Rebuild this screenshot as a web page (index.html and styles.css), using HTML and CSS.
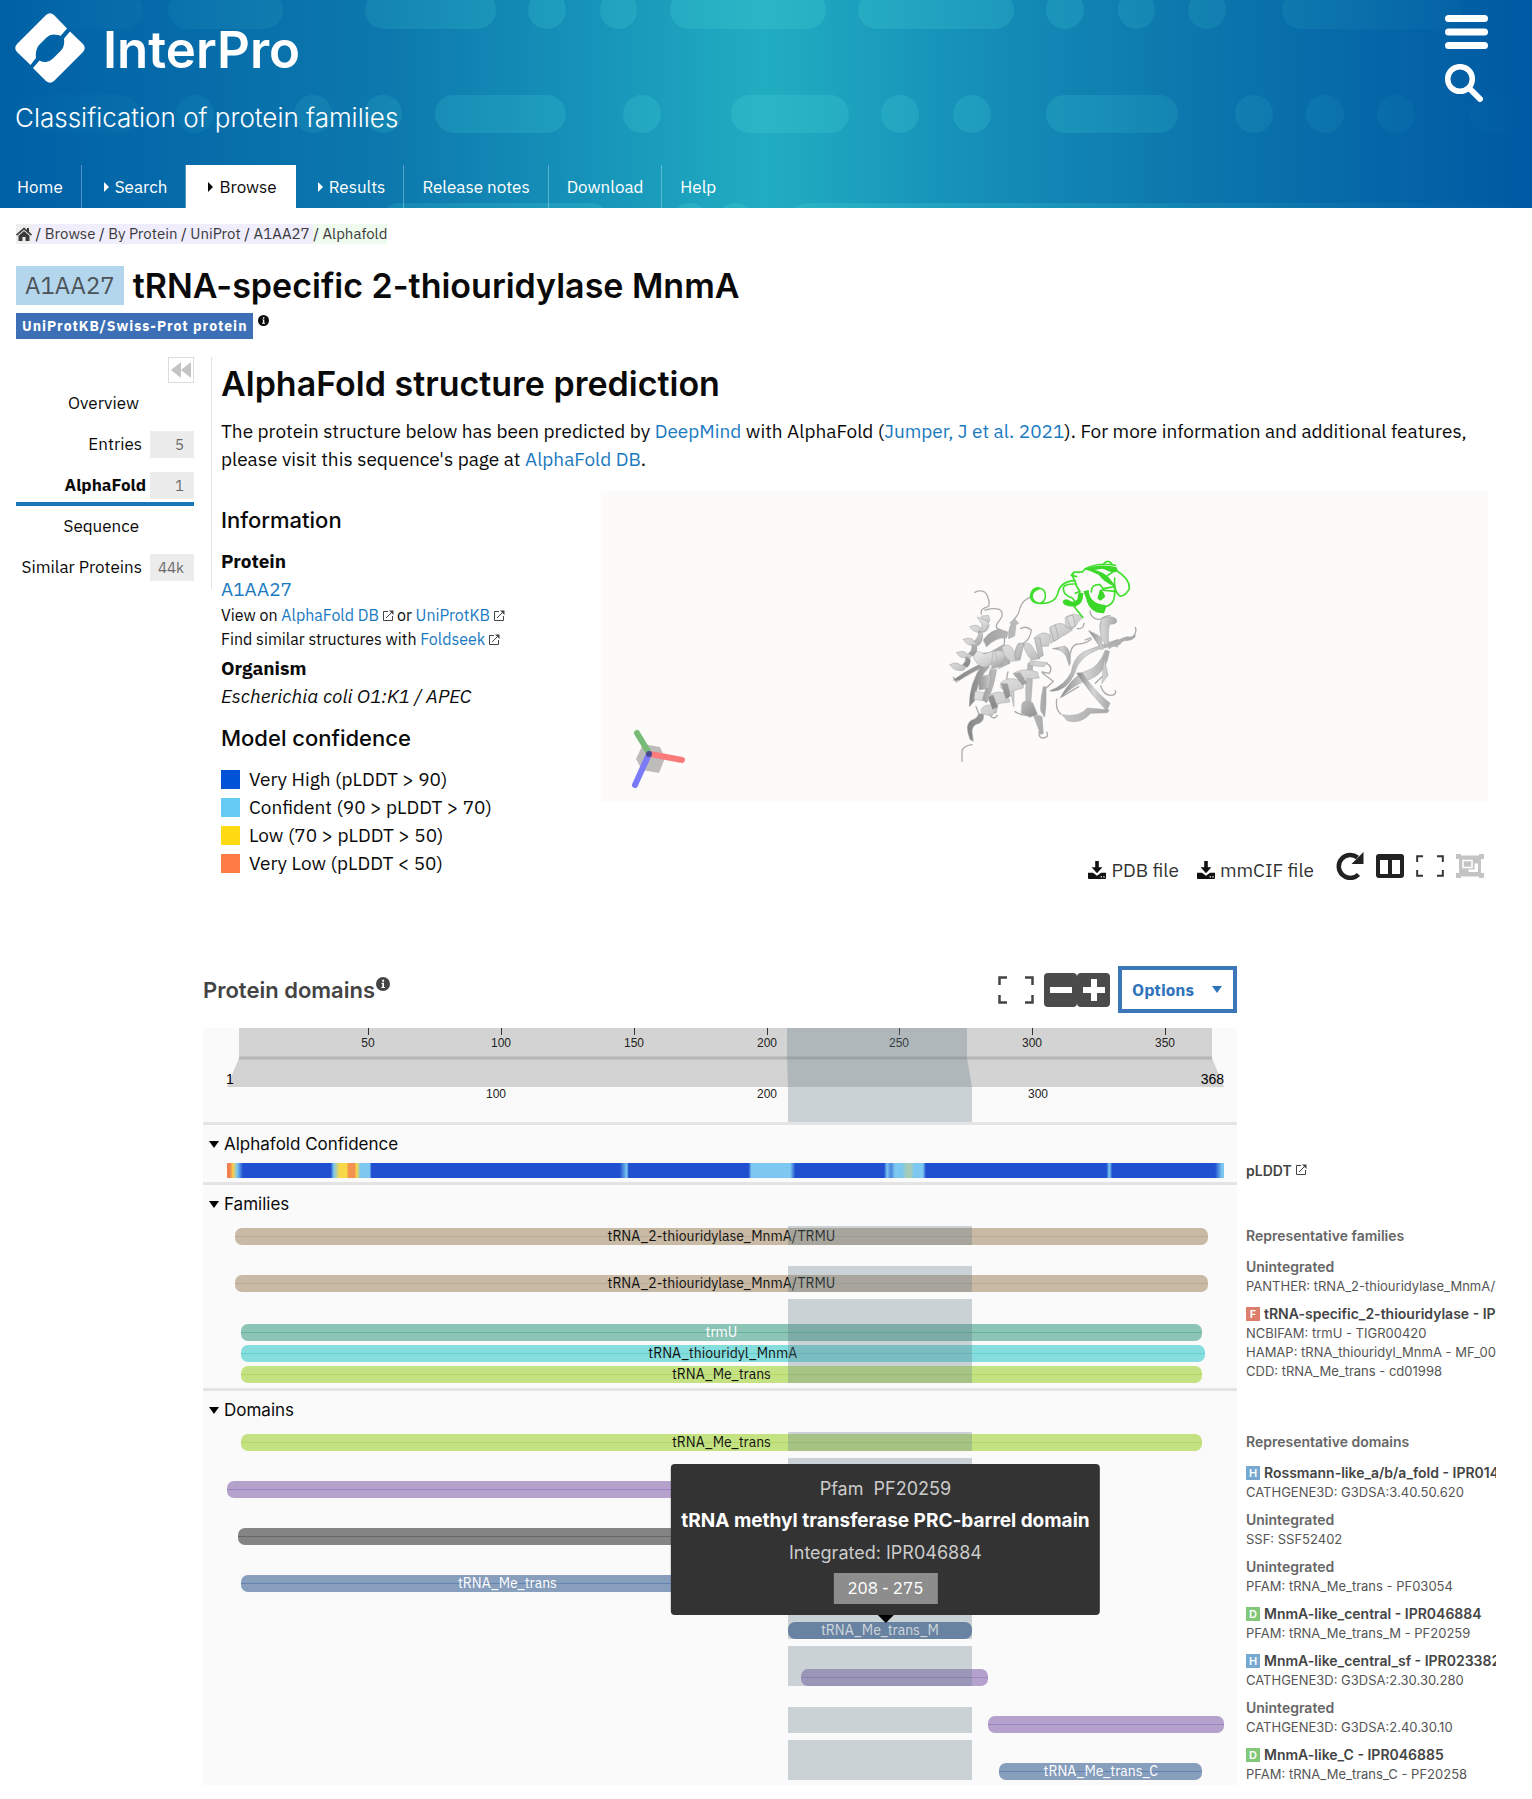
FILE: index.html
```html
<!DOCTYPE html>
<html lang="en">
<head>
<meta charset="utf-8">
<meta name="viewport" content="width=device-width, initial-scale=1">
<title>A1AA27 - AlphaFold - InterPro</title>
<link rel="stylesheet" href="styles.css">
</head>
<body>
<svg class="sprite" aria-hidden="true">
  <symbol id="i-ext" viewBox="0 0 12 12"><path d="M6 1.500H1.500v9h9V6M4 8l6-6" fill="none" stroke="currentColor" stroke-width="1"/><path d="M7 .500h4.500V5z" fill="currentColor"/></symbol>
  <symbol id="i-info" viewBox="0 0 14 14"><circle cx="7" cy="7" r="7" fill="currentColor"/><path d="M5.500 5.800h2.500v4.200h1v1H5.300v-1h1V6.800h-.8zM6.200 2.800h1.900v1.900H6.200z" fill="#fff"/></symbol>
  <symbol id="i-download" viewBox="0 0 20 20"><path d="M8 0h4v7h4l-6 6.500L4 7h4zM0 13h5.500l4.500 3.500 4.500-3.500H20v6q0 1-1 1H1q-1 0-1-1z" fill="currentColor"/><path d="M14 17h1.500v1.300H14zM17 17h1.500v1.300H17z" fill="#fff"/></symbol>
  <symbol id="i-expand" viewBox="0 0 36 28"><path d="M9 1.500H1.500V9M27 1.500h7.500V9M9 26.500H1.500V19M27 26.500h7.500V19" fill="none" stroke="currentColor" stroke-width="2.500"/></symbol>
</svg>

<header class="masthead">
  <svg class="masthead-art" viewBox="0 0 1532 208" preserveAspectRatio="xMidYMin slice" aria-hidden="true">
    <defs><linearGradient id="pill" gradientUnits="userSpaceOnUse" x1="0" y1="0" x2="1532" y2="0">
      <stop offset="0" stop-color="#3cc8d0" stop-opacity="0"/><stop offset=".5" stop-color="#3cc8d0" stop-opacity=".34"/><stop offset="1" stop-color="#3cc8d0" stop-opacity="0"/>
    </linearGradient></defs>
    <g fill="url(#pill)">
      <rect x="-20" y="-9" width="162" height="38" rx="19"/><rect x="168" y="-9" width="115" height="38" rx="19"/><rect x="365" y="-9" width="131" height="38" rx="19"/>
      <rect x="528" y="-9" width="38" height="38" rx="19"/><rect x="600" y="-9" width="37" height="38" rx="19"/><rect x="670" y="-9" width="156" height="38" rx="19"/>
      <rect x="858" y="-9" width="156" height="38" rx="19"/><rect x="1046" y="-9" width="38" height="38" rx="19"/><rect x="1118" y="-9" width="37" height="38" rx="19"/>
      <rect x="1188" y="-9" width="38" height="38" rx="19"/><rect x="1282" y="-9" width="180" height="38" rx="19"/>
      <rect x="15" y="95" width="124" height="38" rx="19"/><rect x="176" y="95" width="38" height="38" rx="19"/><rect x="294" y="95" width="38" height="38" rx="19"/>
      <rect x="364" y="95" width="38" height="38" rx="19"/><rect x="435" y="95" width="131" height="38" rx="19"/><rect x="623" y="95" width="38" height="38" rx="19"/>
      <rect x="731" y="95" width="118" height="38" rx="19"/><rect x="881" y="95" width="38" height="38" rx="19"/><rect x="953" y="95" width="38" height="38" rx="19"/>
      <rect x="1046" y="95" width="132" height="38" rx="19"/><rect x="1235" y="95" width="38" height="38" rx="19"/><rect x="1306" y="95" width="38" height="38" rx="19"/>
      <rect x="1377" y="95" width="38" height="38" rx="19"/><rect x="1470" y="95" width="120" height="38" rx="19"/>
      <rect x="380" y="203" width="230" height="38" rx="19"/><rect x="671" y="203" width="38" height="38" rx="19"/><rect x="717" y="203" width="38" height="38" rx="19"/><rect x="789" y="203" width="760" height="38" rx="19"/>
    </g>
  </svg>
  <div class="masthead-top">
    <div class="brand">
      <a class="brand-link" href="#home">
        <svg class="brand-mark" viewBox="0 0 70 70" aria-hidden="true">
          <path d="M31 2q4-3.500 8 0L52 15.500 45.500 23q-2-1.500-7-1.500-4 0-7 3L24 32q-4 5-3 13l-5.500 7L2 39q-3.500-4 0-8z" fill="#fff"/>
          <path d="M55 18.500L68 31q3.500 4 0 8L39 68q-4 3.500-8 0L18 55l6.500-7.500q2 1.500 6.500 1.500 4-.5 7-3.500l8-8q4-4 3-12z" fill="#fff"/>
        </svg>
        <span class="brand-name">InterPro</span>
      </a>
      <p class="brand-tag">Classification of protein families</p>
    </div>
    <div class="masthead-tools">
      <button type="button" aria-label="Menu"><svg width="43" height="35" viewBox="0 0 43 35"><path d="M3.500 3.500h36M3.500 17h36M3.500 30.500h36" stroke="#fff" stroke-width="7" stroke-linecap="round"/></svg></button>
      <button type="button" aria-label="Search"><svg width="38" height="38" viewBox="0 0 38 38" fill="none" stroke="#fff"><circle cx="15" cy="15" r="12.300" stroke-width="5.500"/><path d="M24 24l11 11" stroke-width="6" stroke-linecap="round"/></svg></button>
    </div>
  </div>
  <nav class="mainnav">
    <a href="#home">Home</a>
    <a class="has-sub" href="#search">Search</a>
    <a class="has-sub is-active" href="#browse">Browse</a>
    <a class="has-sub" href="#results">Results</a>
    <a href="#release">Release notes</a>
    <a href="#download">Download</a>
    <a href="#help">Help</a>
  </nav>
</header>

<nav class="crumbs" aria-label="Breadcrumb">
  <span class="crumb-home"><a href="#home" aria-label="Home"><svg width="16" height="14" viewBox="0 0 32 28"><path d="M16 1L0 15l2 2.500L16 5.500l14 12 2-2.500-6-5.300V2h-4v4.200z" fill="currentColor"/><path d="M16 8L5 17.500V28h8v-8h6v8h8V17.500z" fill="currentColor"/></svg></a></span><span class="crumb-path">&nbsp;/ <a href="#browse">Browse</a> / <a href="#protein">By Protein</a> / <a href="#uniprot">UniProt</a> / <a href="#acc">A1AA27</a>&nbsp;</span><span class="crumb-here">/ <a href="#alphafold">Alphafold</a></span>
</nav>

<div class="title">
  <span class="accession">A1AA27</span>
  <h1>tRNA-specific 2-thiouridylase MnmA</h1>
</div>
<div class="status"><span class="db-tag">UniProtKB/Swiss-Prot protein</span><svg class="status-info" viewBox="0 0 14 14"><use href="#i-info"/></svg></div>

<div class="layout">
  <aside class="side">
    <button class="collapse" type="button" aria-label="Collapse menu"><svg width="20" height="16" viewBox="0 0 20 16"><path d="M10 0v16L0 8zM20 0v16L10 8z" fill="#c4c4c4"/></svg></button>
    <ul>
      <li><a class="plain" href="#overview">Overview</a></li>
      <li><a href="#entries">Entries<span class="count">5</span></a></li>
      <li class="is-current"><a href="#alphafold">AlphaFold<span class="count">1</span></a></li>
      <li><a class="plain" href="#sequence">Sequence</a></li>
      <li><a href="#similar">Similar Proteins<span class="count">44k</span></a></li>
    </ul>
  </aside>
  <main class="content">
    <h2>AlphaFold structure prediction</h2>
    <p class="lead">The protein structure below has been predicted by <a href="#dm">DeepMind</a> with AlphaFold (<a href="#ref">Jumper, J et al. 2021</a>). For more information and additional features, please visit this sequence's page at <a href="#afdb">AlphaFold DB</a>.</p>
    <div class="model">
      <section class="info">
        <h3>Information</h3>
        <h4>Protein</h4>
        <p><a href="#acc">A1AA27</a></p>
        <p class="small">View on <a href="#afdb">AlphaFold DB</a><svg class="ext" viewBox="0 0 12 12"><use href="#i-ext"/></svg>or <a href="#kb">UniProtKB</a><svg class="ext" viewBox="0 0 12 12"><use href="#i-ext"/></svg></p>
        <p class="small">Find similar structures with <a href="#fs">Foldseek</a><svg class="ext" viewBox="0 0 12 12"><use href="#i-ext"/></svg></p>
        <h4>Organism</h4>
        <p><em>Escherichia coli O1:K1 / APEC</em></p>
        <h3 class="conf-title">Model confidence</h3>
        <ul class="legend">
          <li><span class="swatch vhigh"></span>Very High (pLDDT &gt; 90)</li>
          <li><span class="swatch high"></span>Confident (90 &gt; pLDDT &gt; 70)</li>
          <li><span class="swatch low"></span>Low (70 &gt; pLDDT &gt; 50)</li>
          <li><span class="swatch vlow"></span>Very Low (pLDDT &lt; 50)</li>
        </ul>
      </section>
      <div class="viewer">
        <svg class="scene" viewBox="0 0 887 311" role="img" aria-label="Predicted structure of A1AA27">
          <defs>
            <linearGradient id="r1" x1="0" y1="0" x2="1" y2="1"><stop offset="0" stop-color="#efefef"/><stop offset=".55" stop-color="#d0d0d0"/><stop offset="1" stop-color="#8c8c8c"/></linearGradient>
            <linearGradient id="r2" x1="0" y1="0" x2="1" y2="0"><stop offset="0" stop-color="#868686"/><stop offset=".5" stop-color="#d4d4d4"/><stop offset="1" stop-color="#a8a8a8"/></linearGradient>
            <linearGradient id="r3" x1="0" y1="0" x2="0" y2="1"><stop offset="0" stop-color="#e2e2e2"/><stop offset="1" stop-color="#868686"/></linearGradient>
          </defs>
          <g transform="translate(299 39) scale(.33333)" stroke-linejoin="round" stroke-linecap="round">
            <g fill="none" stroke="#ababab" stroke-width="4">
              <path d="M224 187q28-12 38 10 10 25 2 33-24 6-20 22M255 240q42-10 50 5 6 14-10 30-14 20 5 24 18 12 12 50M342 268q14-12 18-34 8-24 34-34M374 336q16-8 20-36-16-14-32-4M186 694v-30q2-16 30-20"/>
              <path d="M552 280q-2 18-20 16M570 243q2 24 30 26 16-12 30-12M510 400q-4-50 20-58 22 2 44-14M706 292q6 16-8 30M602 468q10 30 34 28 14-4 10-14M556 330l16-6M470 508q-4 30 12 44M486 500l50-30M586 460l20-20M324 426q-10 30 12 30M428 430l32 24-24 22M440 400q20 10 8 30l-22-4M160 442l10 14M228 530l10 24M270 556q12 16 22 0M345 545q30 20 50 0M418 604q-4 20 12 20 18-2 10-18"/>
            </g>
            <g fill="url(#r2)" stroke="#a2a2a2" stroke-width="1.500">
              <path d="M248 402q-42 60-40 128l16-18q10-70 44-100zM270 420q-12 60-24 90l14 8q24-50 30-100zM384 400q-10 60-6 120l14 4q6-60 6-124zM332 480q4 34 10 50v-54zM430 470q-10 40-8 72l12 20q6-40 4-90zM398 550l24 64 8-4-4-50zM300 500l-12 50-14-4 8-50z"/>
              <path d="M454 484q50 0 72-60 12-44 70-66l66-16-8-14q-60 20-104 38-30 18-36 60-20 40-64 56z"/><path d="M480 504q50-46 90-56 50-20 58-84l-12-4q-20 54-60 64-40 16-76 80z"/>
              <path d="M566 302l40 58 12-14-20-28zM600 300q-6-36 24-40 26 0 26 12t-18 10q-10 6-6 60l-18 10zM612 380l12 56-18 24z"/><path d="M530 430q40 60 90 112l10-22q-50-40-84-92z"/><path d="M458 356l36-8q22 10 14 60l-10-30q-10-20-40-22z"/>
              <path d="M626 346q40-24 56-26 18 4 22-8l2 8q-8 12-34 12-20 12-20 20-12-8-24 4zM330 278l14-12 12 14-8 4-4 34-18 8q-2-30 8-44zM160 450q60-44 120-62l-8 14q-50 20-96 50zM240 384l70-40 10 10-60 60zM250 330q20-30 50-32l24 8-4 18q-30-4-60 26z"/>
              <path d="M486 554q50 10 76-20l66 6-6 8-50 2q-30 34-70 22l-14-16zM392 392l50 6-10 12-44-4zM250 552q4 20-12 28-22 4-22 26 2 14 4 28l-10-6q-18-46 6-58 16-4 20-18z"/>
              <path d="M236 440l36-6-4 40-30 6zM226 380q20-16 50-10l-20 24zM290 380l36-10 4 30-34 16z"/>
            </g>
            <g fill="url(#r1)" stroke="#a8a8a8" stroke-width="1.500">
              <path d="M244 258l22-2q6 14 2 20l-16 10zM210 290q20-12 34 6l24-12q-2 24-28 24-24-2-30-18zM190 328q22-10 34 6l22-10q-2 28-26 24-22-2-30-20zM170 368q22-10 32 4l18-8q0 22-22 20-22 0-28-16zM150 404q18-12 34 2l16-2q-2 20-22 18-20-2-28-18z"/>
              <path d="M216 370q20-12 36 2l32-10 8 30-34 20q-30 0-42-42zM280 366q20-10 38 4l-10 36-34 12z"/>
              <path d="M306 350q20-12 32 6l18 36-22 2q-24-10-28-44zM354 342l18-4-12 54-14-10zM370 340q18-6 28 12l22 34-26 4q-20-20-24-50zM404 322q28-24 46-6l-4 32-32 2zM450 294q30-26 52-4l16 10-22 14q-20 10-44 26zM496 262q28-18 54 0l-14 12q-10 20-22 24l-16-6z"/>
              <path d="M340 430q30-20 72-4l6 18q-30 6-70-4zM302 458q28-24 66-2l2 18-44 12-24-12zM262 498q30-20 60-6l8 24-44 6-22-10zM226 484l26 4-6 24-24-4zM244 536q24-24 46 2l-14 20-30-6zM366 520q10-14 32-2l14 34-22 10-26-12z"/>
            </g>
            <g fill="url(#r3)" stroke="#949494" stroke-width="1.500">
              <path d="M232 262l14 20q2 14-10 22l14 2q18-16 14-32zM236 306q0 18-14 28l12 12q16-16 14-34zM216 344q2 16-10 26l14 8q14-14 10-30zM198 382q0 14-10 22l14 8q12-12 8-26z"/>
              <path d="M404 326l12 58 14-8-10-52zM450 292l12 42 14-8-10-40zM500 262l12 32 14-6-8-32zM342 432l26 34 12-8-20-30zM304 462l14 44 14-8-10-36zM264 500l14 38 14-8-12-34zM356 340q-16 20-10 48l14-2q2-22 12-42z"/>
            </g>
            <g fill="none" stroke="#3fdf2c" stroke-width="5">
              <path d="M420 220q-30 0-28-26 6-22 26-20 20 4 18 26-2 16-16 20-20-2-24-20 0-18 22-24M420 220q46 2 54-32 8-34 50-36M524 152q-14-24 4-26 20 4 28-10M530 140l-16-4 8-10h26M522 162q-34 0-32 16 4 20 24 24 18 14 10 30l24 30M524 150q4 20 16 34l-14 6"/>
              <path d="M556 116q40-20 90-10M610 102q14-16 26 0M650 122q40 24 38 54-12 24-28 22-20-14-16-54M574 186q0-24 26-22l10 12 34-6M644 176q4 50-30 54M636 128q-20 10-22 22M644 184l-40-4"/>
            </g>
            <g fill="#3bd82a"><path d="M552 118q50-20 98-6l4 12-16 4-30-12-40 6zM558 118q60-4 90 56l-8-6q-30-14-44-34zM550 184l16-4q2 40 46 44l8 4-8 22q-44 0-54-46zM488 214q10-12 24 0 12 4 20-6l4-22 14 4q0 36-28 40-34 0-34-16zM592 206l8-28 10 8 6 14-14 12z"/></g>
          </g>
          <g stroke-linecap="round" stroke-width="6">
            <path d="M42 253l17 3 5 11-6 15-17-3-6-11z" fill="#bdbcbb" stroke="none"/>
            <path d="M36 242l12 20" stroke="#78bb78"/><path d="M49 263l32 6" stroke="#fb7a7a"/>
            <path d="M48 263L34 294" stroke="#7b7bfa"/><circle cx="48" cy="263" r="3" fill="#4a4a8c"/>
          </g>
        </svg>
        <div class="toolbar">
          <button class="file" type="button"><svg width="18" height="20"><use href="#i-download"/></svg>PDB file</button>
          <button class="file" type="button"><svg width="18" height="20"><use href="#i-download"/></svg>mmCIF file</button>
          <div class="viewer-icons">
            <button type="button" aria-label="Reset view"><svg width="28" height="28" viewBox="0 0 28 28"><path d="M22.500 22.500A11.500 11.500 0 1 1 21.500 5.500" fill="none" stroke="#222" stroke-width="4.500"/><path d="M27.500 0v12H15.500z" fill="#222"/></svg></button>
            <button type="button" aria-label="Split view"><svg width="28" height="24" viewBox="0 0 28 24"><path fill-rule="evenodd" d="M3 0h22q3 0 3 3v18q0 3-3 3H3q-3 0-3-3V3q0-3 3-3zM4 6v14h8V6zM16 6v14h8V6z" fill="#222"/></svg></button>
            <button type="button" aria-label="Full screen"><svg width="28" height="22"><use href="#i-expand"/></svg></button>
            <button type="button" aria-label="Group selection" disabled><svg width="28" height="24" viewBox="0 0 28 24" fill="#c4c4c4"><path d="M0 0h5v5H0zM23 0h5v5h-5zM0 19h5v5H0zM23 19h5v5h-5zM3 1.500h22v21H3z"/><path d="M7 6.500h9v7H7z" fill="none" stroke="#fff" stroke-width="1.500"/><path d="M18.500 9.500h3.500v8.500h-9.500v-2.500h6z" fill="#fff"/></svg></button>
          </div>
        </div>
      </div>
    </div>
  </main>
</div>

<section class="domains">
  <div class="domains-head">
    <h2>Protein domains<svg class="head-info" viewBox="0 0 14 14"><use href="#i-info"/></svg></h2>
    <div class="zoom-tools">
      <button class="full" type="button" aria-label="Full screen"><svg width="38" height="28"><use href="#i-expand"/></svg></button>
      <button class="zoom" type="button" aria-label="Zoom out"><svg width="22" height="22" viewBox="0 0 22 22"><path d="M0 8h22v6H0z" fill="#fff"/></svg></button>
      <button class="zoom" type="button" aria-label="Zoom in"><svg width="22" height="22" viewBox="0 0 22 22"><path d="M0 8h8V0h6v8h8v6h-8v8H8v-8H0z" fill="#fff"/></svg></button>
      <button class="options" type="button">Options<span class="caret"></span></button>
    </div>
  </div>

  <div class="tracks">
    <svg class="ruler" viewBox="0 0 1034 94" preserveAspectRatio="none" role="img" aria-label="Sequence ruler">
      <path d="M36 0h973v30l12 29H24l12-29z" fill="#d3d3d3"/>
      <path d="M36 30h973" stroke="#b5b5b5" stroke-width="3"/>
      <path d="M165.500 0v7M298.500 0v7M431.500 0v7M564.500 0v7M696.500 0v7M829.500 0v7M962.500 0v7" stroke="#333"/>
      <g class="ticks"><text x="165" y="19">50</text><text x="298" y="19">100</text><text x="431" y="19">150</text><text x="564" y="19">200</text><text x="696" y="19">250</text><text x="829" y="19">300</text><text x="962" y="19">350</text>
      <text x="293" y="70">100</text><text x="564" y="70">200</text><text x="835" y="70">300</text></g>
      <g class="bounds"><text x="23" y="56">1</text><text x="1021" y="56" text-anchor="end">368</text></g>
      <path d="M584 0h180v30l5 29v35H585V59l-1-29z" class="ruler-mark"/>
    </svg>

    <div class="group">
      <button class="group-head" type="button">Alphafold Confidence</button>
      <div class="row conf"><div class="lane"><div class="plddt"></div></div><div class="label dark">pLDDT<svg class="ext" viewBox="0 0 12 12"><use href="#i-ext"/></svg></div></div>
    </div>

    <div class="group">
      <button class="group-head" type="button">Families</button>
      <div class="row rep"><div class="lane"><div class="bar beige" style="--s:4;--e:362">tRNA_2-thiouridylase_MnmA/TRMU</div><i class="mark"></i></div><div class="label"><b>Representative families</b></div></div>
      <div class="row unint"><div class="lane"><div class="bar beige" style="--s:4;--e:362">tRNA_2-thiouridylase_MnmA/TRMU</div><i class="mark"></i></div><div class="label"><b>Unintegrated</b><span>PANTHER: tRNA_2-thiouridylase_MnmA/TRMU - PTHR11933</span></div></div>
      <div class="row triple"><div class="lane"><div class="bar teal" style="--s:6;--e:360">trmU</div><div class="bar cyan" style="--s:6;--e:361">tRNA_thiouridyl_MnmA</div><div class="bar lime" style="--s:6;--e:360">tRNA_Me_trans</div><i class="mark"></i></div><div class="label"><b class="ipr"><i class="type fam">F</i>tRNA-specific_2-thiouridylase - IPR004506</b><span>NCBIFAM: trmU - TIGR00420</span><span>HAMAP: tRNA_thiouridyl_MnmA - MF_00144</span><span>CDD: tRNA_Me_trans - cd01998</span></div></div>
    </div>

    <div class="group">
      <button class="group-head" type="button">Domains</button>
      <div class="row rep"><div class="lane"><div class="bar lime" style="--s:6;--e:360">tRNA_Me_trans</div><i class="mark"></i></div><div class="label"><b>Representative domains</b></div></div>
      <div class="row"><div class="lane"><div class="bar purple" style="--s:1;--e:211"></div><i class="mark"></i></div><div class="label"><b class="ipr"><i class="type hom">H</i>Rossmann-like_a/b/a_fold - IPR014729</b><span>CATHGENE3D: G3DSA:3.40.50.620</span></div></div>
      <div class="row unint"><div class="lane"><div class="bar grey" style="--s:5;--e:210"></div><i class="mark"></i></div><div class="label"><b>Unintegrated</b><span>SSF: SSF52402</span></div></div>
      <div class="row unint"><div class="lane"><div class="bar blue" style="--s:6;--e:202">tRNA_Me_trans</div><i class="mark"></i></div><div class="label"><b>Unintegrated</b><span>PFAM: tRNA_Me_trans - PF03054</span></div></div>
      <div class="row"><div class="lane"><div class="bar blue is-hovered" style="--s:208;--e:275">tRNA_Me_trans_M</div><i class="mark"></i>
        <div class="tooltip" role="tooltip"><p>Pfam&nbsp; PF20259</p><p><strong>tRNA methyl transferase PRC-barrel domain</strong></p><p>Integrated: IPR046884</p><span class="range">208 - 275</span></div>
      </div><div class="label"><b class="ipr"><i class="type dom">D</i>MnmA-like_central - IPR046884</b><span>PFAM: tRNA_Me_trans_M - PF20259</span></div></div>
      <div class="row"><div class="lane"><div class="bar purple" style="--s:213;--e:281"></div><i class="mark"></i></div><div class="label"><b class="ipr"><i class="type hom">H</i>MnmA-like_central_sf - IPR023382</b><span>CATHGENE3D: G3DSA:2.30.30.280</span></div></div>
      <div class="row unint"><div class="lane"><div class="bar purple" style="--s:282;--e:368"></div><i class="mark"></i></div><div class="label"><b>Unintegrated</b><span>CATHGENE3D: G3DSA:2.40.30.10</span></div></div>
      <div class="row"><div class="lane"><div class="bar blue" style="--s:286;--e:360">tRNA_Me_trans_C</div><i class="mark"></i></div><div class="label"><b class="ipr"><i class="type dom">D</i>MnmA-like_C - IPR046885</b><span>PFAM: tRNA_Me_trans_C - PF20258</span></div></div>
    </div>
  </div>
</section>
</body>
</html>
```
FILE: styles.css
```css
:root {
  --text: "IBM Plex Sans", "Noto Sans", sans-serif;
  --head: "Inter", "Liberation Sans", sans-serif;
  --link: #1a7abf;
  --mark: rgba(98, 124, 134, .31);
}
* { box-sizing: border-box; }
body { margin: 0; background: #fff; color: #0a0a0a; font: 19px/28px var(--text); }
h1, h2, h3, h4, p, ul { margin: 0; padding: 0; font-weight: inherit; }
ul { list-style: none; }
a { color: var(--link); text-decoration: none; }
button { font: inherit; color: inherit; background: none; border: 0; padding: 0; cursor: pointer; }
svg { display: block; }
.sprite { display: none; }

/* Masthead */
.masthead { position: relative; height: 208px; display: flex; flex-direction: column; justify-content: space-between; overflow: hidden; color: #fff;
  background: linear-gradient(90deg, #0060a6, #0c78ad 25%, #1590b8 37%, #21adc1 50%, #158eb8 64%, #0c78ad 77%, #0059a3); }
.masthead-art { position: absolute; inset: 0; width: 100%; height: 100%; }
.masthead-top, .mainnav { position: relative; display: flex; }
.masthead-top { justify-content: space-between; padding: 13px 44px 0 15px; }
.brand-link { display: flex; align-items: center; gap: 18px; color: #fff; }
.brand-mark { width: 70px; height: 70px; }
.brand-name { padding-top: 4px; font: 600 51px/66px var(--head); }
.brand-tag { padding-top: 17px; font: 300 26px/36px var(--head); }
.masthead-tools { display: flex; flex-direction: column; align-items: flex-start; gap: 14px; padding-top: 2px; }
.mainnav a { height: 43px; padding: 0 18px; line-height: 45px; font-size: 17px; color: #fff; border-right: 1px solid rgba(255, 255, 255, .3); }
.mainnav a:first-child { padding-left: 17px; }
.mainnav a:last-child { border: 0; }
.mainnav .has-sub::before { content: ""; display: inline-block; margin: 0 6px 1px 4px; border: 5px solid transparent; border-left: 5px solid; border-right: 0; }
.mainnav .is-active { color: #0a0a0a; background: #fff; border-color: #fff; }

/* Breadcrumb and title */
.crumbs { display: flex; padding: 16px 16px 0; font-size: 15px; line-height: 20px; color: #222; }
.crumbs a { color: #3a3a3a; }
.crumb-home { display: flex; align-items: center; background: #eee; }
.crumb-path { background: #f0edfd; }
.crumb-here { background: #effbee; }
.title { display: flex; align-items: center; gap: 9px; padding: 22px 16px 0; }
.accession { padding: 0 9px; font-size: 24px; line-height: 39px; color: #4b5358; background: #b3d6ec; }
h1 { font: 600 34px/39px var(--head); }
.status { display: flex; gap: 5px; padding: 8px 16px 0; }
.db-tag { padding: 0 6px; font-size: 14px; font-weight: 700; line-height: 26px; letter-spacing: 1px; color: #fff; background: #3c6fb5; }
.status-info { width: 11px; height: 11px; margin-top: 2px; }

/* Side menu */
.layout { display: flex; align-items: flex-start; gap: 9px; padding: 18px 44px 0 16px; }
.side { flex: 0 0 196px; height: 232px; padding-right: 17px; border-right: 1px solid #e2e2e2; font-size: 17px; line-height: 27px; }
.collapse { display: flex; align-items: center; justify-content: center; width: 26px; height: 26px; margin-left: auto; border: 1px solid #ddd; background: #fff; }
.side li { height: 41px; padding-top: 7px; }
.side a { display: flex; justify-content: flex-end; gap: 8px; color: #0a0a0a; white-space: nowrap; }
.side .plain { padding-right: 55px; }
.side .count { width: 44px; padding-right: 10px; text-align: right; font-size: 15px; line-height: 27px; color: #6b6b6b; background: #ececec; font-weight: 400; }
.side .is-current { border-bottom: 4px solid #1a76bb; font-weight: 700; }
.side .is-current a { gap: 4px; }

/* Content */
.content { flex: 1; min-width: 0; }
.content h2 { padding-top: 6px; font: 600 34px/42px var(--head); }
.lead { padding-top: 12px; }
.model { display: flex; padding-top: 18px; }
.info { flex: 0 0 380px; padding-top: 15px; }
.info h3 { font: 500 22px/28px var(--head); }
.info h4 { padding-top: 4px; font-weight: 700; line-height: 27px; }
.info h3 + h4 { padding-top: 14px; }
.info .small { font-size: 16px; line-height: 24px; }
.ext { display: inline-block; width: 12px; height: 12px; margin: 0 3px; vertical-align: -1px; color: #444; }
.info .conf-title { padding-top: 14px; }
.legend { padding-top: 13px; }
.legend li { display: flex; align-items: center; gap: 9px; }
.swatch { width: 19px; height: 19px; }
.vhigh { background: #0053d6; }
.high { background: #65cbf3; }
.low { background: #ffdb13; }
.vlow { background: #ff7d45; }
.viewer { flex: 1; min-width: 0; }
.scene { width: 100%; background: #fcfbf9; }
.toolbar { display: flex; justify-content: flex-end; align-items: center; gap: 18px; padding: 46px 4px 0 0; }
.file { display: flex; align-items: center; gap: 5px; padding-top: 8px; color: #333; }
.file svg { color: #111; }
.viewer-icons { display: flex; align-items: center; gap: 12px; padding-left: 4px; }
.viewer-icons button { height: 28px; display: flex; align-items: center; color: #333; }

/* Domain viewer */
.domains { padding: 82px 36px 14px 203px; }
.domains-head { display: flex; justify-content: space-between; align-items: center; height: 47px; margin-right: 259px; }
.domains-head h2 { display: flex; gap: 1px; font: 600 22px/30px var(--head); color: #444; }
.head-info { width: 14px; height: 14px; margin-top: 2px; }
.zoom-tools { display: flex; align-items: center; }
.full { margin-right: 9px; color: #444; }
.zoom { display: flex; align-items: center; justify-content: center; width: 33px; height: 34px; border-radius: 4px; background: #4b4b4b; }
.options { display: flex; align-items: center; justify-content: space-between; width: 119px; height: 47px; margin-left: 8px; padding: 0 11px 0 10px; border: 4px solid #3b76b8; font-size: 17px; font-weight: 700; color: #2f74bb; }
.caret { border: 5px solid transparent; border-top: 7px solid; border-bottom: 0; }
.tracks { padding-top: 15px; }
.ruler { width: calc(100% - 259px); height: 94px; background: #fafafa; font: 12px "Liberation Sans", Arial, sans-serif; }
.ticks { text-anchor: middle; fill: #222; }
.bounds { font-size: 14px; }
.ruler-mark { fill: var(--mark); }
.group::before { content: ""; display: block; height: 3px; margin-right: 259px; background: #e4e4e4; }
.group-head { display: flex; align-items: center; gap: 5px; width: calc(100% - 259px); height: 38px; padding-left: 6px; background: #fafafa; font: 17px/38px var(--head); }
.group-head::before { content: ""; border: 5px solid transparent; border-top: 7px solid #000; border-bottom: 0; }
.row { display: grid; grid-template-columns: minmax(0, 1fr) 259px; height: 47px; }
.row.conf { height: 19px; }
.row.rep { height: 22px; }
.row.triple { height: 91px; }
.row:last-child:not(.conf) { margin-bottom: 5px; }
.lane { position: relative; display: flex; flex-direction: column; justify-content: flex-end; gap: 4px; padding: 0 13px 0 24px; background: #fafafa; }
.row:last-child:not(.conf) .lane { box-shadow: 0 5px #fafafa; }
.conf .lane { justify-content: flex-start; }
.plddt { height: 15px; background: linear-gradient(90deg, #f08050 .3%, #f8d048 .6%, #7cc8f0 1%, #2050d0 1.6% 10.4%, #7cc8f0 10.7%, #f8d848 11.3% 12%, #f49350 12.2% 12.8%, #f8d848 13%, #7cc8f0 13.4% 14.3%, #2050d0 14.5% 39.4%, #7cc8f0 40.1%, #2050d0 40.3% 52.3%, #7cc8f0 52.6% 56.5%, #2050d0 57% 65.9%, #7cc8f0 66.2%, #4a84de 66.6%, #7cc8f0 67% 67.7%, #a4ccb8 68.2% 68.6%, #7cc8f0 68.9% 69.8%, #2050d0 70.1% 88.2%, #7cc8f0 88.5%, #2050d0 88.8% 99.1%, #7cc8f0 99.8%); }
.bar { --w: calc(100% / 368); height: 17px; margin-left: calc((var(--s) - 1) * var(--w)); width: calc((var(--e) - var(--s) + 1) * var(--w)); border-radius: 7px; text-align: center; font-size: 14px; line-height: 16px; white-space: nowrap; color: #111;
  background-image: linear-gradient(transparent 8px, var(--line) 8px 9px, transparent 9px); }
.beige { --line: #b9ab94; background-color: #c8baa5; }
.teal { --line: #66b39f; background-color: #8cc4b5; color: #fff; }
.cyan { --line: #6acfcf; background-color: #86dddd; }
.lime { --line: #b3d868; background-color: #c5e283; }
.purple { --line: #a084c0; background-color: #b4a2cc; }
.grey { --line: #666; background-color: #848484; }
.blue { --line: #6383b2; background-color: #879ebd; color: #fff; }
.blue.is-hovered { --line: #6c86af; background-color: #6c86af; }
.mark { position: absolute; top: 7px; bottom: 0; left: calc(24px + (100% - 37px) * 207 / 368); width: calc((100% - 37px) * 68 / 368); background: var(--mark); }
.rep .mark { top: 3px; }
.unint .mark { top: 21px; }
.label { display: flex; flex-direction: column; gap: 7px; margin-left: 9px; padding-top: 15px; overflow-x: clip; white-space: nowrap; font: 13px/12px var(--head); color: #555; }
.label b { margin-bottom: -1px; font-size: 14px; line-height: 14px; font-weight: 600; color: #666; }
.label .ipr { display: flex; align-items: center; gap: 4px; color: #444; }
.rep .label { padding-top: 6px; }
.label.dark { flex-direction: row; gap: 0; padding-top: 0; font-size: 14px; line-height: 15px; font-weight: 600; color: #444; }
.label.dark .ext { margin-top: 1px; }
.type { flex: none; width: 14px; height: 14px; text-align: center; font-style: normal; font-size: 11px; line-height: 14px; color: #fff; }
.fam { background: #dd7d6c; }
.hom { background: #76a8d0; }
.dom { background: #82c77a; }

.tooltip { position: absolute; z-index: 2; left: 66%; bottom: 24px; transform: translateX(-50%); padding: 9px 10px 11px; border-radius: 4px; background: #333; color: #ccc; text-align: center; white-space: nowrap; font: 18px/32px var(--head); }
.tooltip::after { content: ""; position: absolute; top: 100%; left: 50%; margin-left: -8px; border: 8px solid transparent; border-top-color: #000; border-bottom: 0; }
.tooltip strong { font-size: 19px; font-weight: 700; color: #fff; }
.range { display: inline-block; margin-top: 4px; padding: 0 14px; font: 17px/31px var(--text); color: #fff; background: #8d8d8d; }
```
